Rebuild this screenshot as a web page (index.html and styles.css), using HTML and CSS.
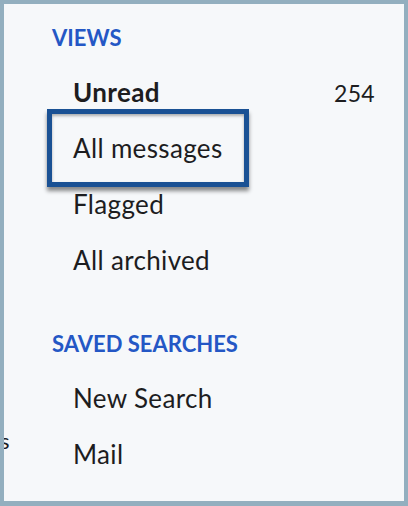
FILE: index.html
```html
<!DOCTYPE html>
<html lang="en">
<head>
<meta charset="utf-8">
<title>Views</title>
<link rel="stylesheet" href="styles.css">
</head>
<body>
<div class="frame">
  <span class="stray">s</span>
  <nav class="panel">
    <h2 class="section-title">VIEWS</h2>
    <ul class="list">
      <li class="row unread"><span class="label">Unread</span><span class="count">254</span></li>
      <li class="row"><span class="label focused">All messages</span></li>
      <li class="row"><span class="label">Flagged</span></li>
      <li class="row"><span class="label">All archived</span></li>
    </ul>
    <h2 class="section-title saved">SAVED SEARCHES</h2>
    <ul class="list">
      <li class="row"><span class="label">New Search</span></li>
      <li class="row"><span class="label">Mail</span></li>
    </ul>
  </nav>
</div>
</body>
</html>
```

FILE: styles.css
```css
html, body {
  margin: 0;
  padding: 0;
}

body {
  font-family: Lato, "Liberation Sans", sans-serif;
  color: #1d1d1f;
  background: #93afbf;
}

.frame {
  position: relative;
  box-sizing: border-box;
  width: 408px;
  height: 506px;
  border-style: solid;
  border-color: #93afbf;
  border-width: 4px 4px 5px 4px;
  background: #f6f8fa;
  overflow: hidden;
}

.panel {
  padding: 22px 29px 0 48px;
}

.section-title {
  margin: 0;
  font-size: 22px;
  line-height: 24px;
  font-weight: 700;
  color: #2457c5;
  letter-spacing: 0;
}

.section-title.saved {
  margin-top: 44px;
}

.list {
  list-style: none;
  margin: 14px 0 0 0;
  padding: 0 0 0 21px;
}

.row {
  display: flex;
  justify-content: space-between;
  align-items: baseline;
  font-size: 26px;
  letter-spacing: 0.35px;
  line-height: 56px;
  height: 56px;
}

.unread .label {
  font-weight: 700;
}

.label {
  position: relative;
  display: inline-block;
}

.count {
  font-weight: 400;
  font-size: 23px;
  letter-spacing: 0.3px;
}

.focused::after {
  content: "";
  position: absolute;
  top: -11px;
  bottom: -11px;
  left: -26px;
  right: -26px;
  border: 5px solid #1a5194;
  box-shadow: 0 4px 4px rgba(0, 0, 0, 0.45), inset 0 2px 3px rgba(0, 0, 0, 0.3);
}

.stray {
  position: absolute;
  left: -4px;
  top: 426px;
  font-size: 22px;
  line-height: 22px;
}
```
